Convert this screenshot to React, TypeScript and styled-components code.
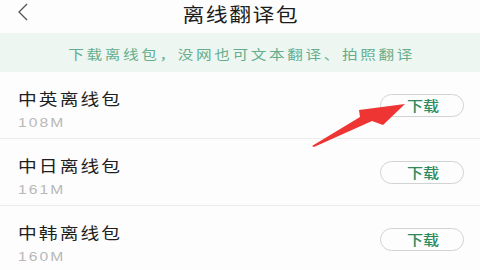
import React from "react";
import styled, { createGlobalStyle } from "styled-components";

const GlobalStyle = createGlobalStyle`
  html, body { margin: 0; padding: 0; background: #fdfdfd; }
  body { font-family: "Noto Sans CJK SC", "Noto Sans", sans-serif; }
  * { box-sizing: border-box; }
`;

const Page = styled.div`
  position: relative;
  width: 480px;
  height: 270px;
  overflow: hidden;
  background: #fdfdfd;
`;

const Header = styled.div`
  height: 33px;
  display: flex;
  align-items: flex-start;
  justify-content: center;
  position: relative;
  background: #fdfdfd;
`;

const BackButton = styled.div`
  position: absolute;
  left: 14px;
  top: 2px;
  width: 18px;
  height: 20px;
  display: flex;
  align-items: center;
  justify-content: center;
`;

const Title = styled.h1`
  margin: 0;
  display: inline-block;
  padding-left: 1px;
  font-size: 19px;
  font-weight: 400;
  letter-spacing: 1.3px;
  line-height: 28px;
  color: #1d1d1d;
  transform: scaleX(1.15);
  transform-origin: center;
`;

const Banner = styled.div`
  height: 39px;
  background: #eef6f2;
  display: flex;
  align-items: center;
  justify-content: center;
  padding-top: 1px;
`;

const BannerText = styled.span`
  display: inline-block;
  font-size: 13px;
  letter-spacing: 2.2px;
  padding-left: 2px;
  color: #64ae8d;
  transform: scaleX(1.2);
  transform-origin: center;
`;

const List = styled.div`
  display: flex;
  flex-direction: column;
`;

const Row = styled.div`
  height: 67px;
  display: flex;
  align-items: center;
  justify-content: space-between;
  border-bottom: 1px solid #ececec;
  padding: 0 16px 0 18px;
`;

const Info = styled.div`
  align-self: flex-start;
  display: flex;
  flex-direction: column;
  align-items: flex-start;
  padding-top: 15px;
`;

const Name = styled.div`
  display: inline-block;
  font-size: 16px;
  letter-spacing: 1.8px;
  line-height: 23px;
  color: #1f1f1f;
  transform: scaleX(1.17);
  transform-origin: left center;
`;

const Size = styled.div`
  display: inline-block;
  font-family: "Liberation Sans", Arial, sans-serif;
  font-size: 13px;
  letter-spacing: 1.7px;
  line-height: 25px;
  color: #b8b8b8;
  transform: scaleX(1.2);
  transform-origin: left center;
`;

const DownloadButton = styled.button`
  width: 84px;
  height: 23px;
  border: 1px solid #d2d2d2;
  border-radius: 12px;
  background: #fdfdfd;
  padding: 0 0 0 2px;
  display: flex;
  align-items: center;
  justify-content: center;
  cursor: pointer;
`;

const ButtonLabel = styled.span`
  display: inline-block;
  color: #2f8a5c;
  font-family: "Noto Sans CJK SC", sans-serif;
  font-size: 14px;
  font-weight: 500;
  line-height: 20px;
  transform: scaleX(1.15);
`;

const ArrowOverlay = styled.svg`
  position: absolute;
  left: 0;
  top: 0;
  pointer-events: none;
`;

const packs = [
  { name: "中英离线包", size: "108M" },
  { name: "中日离线包", size: "161M" },
  { name: "中韩离线包", size: "160M" },
];

export default function App() {
  return (
    <Page>
      <GlobalStyle />
      <Header>
        <BackButton>
          <svg width="14" height="18" viewBox="0 0 14 18">
            <polyline points="11,1 3,9 11,17" fill="none" stroke="#555" strokeWidth="1.3" />
          </svg>
        </BackButton>
        <Title>离线翻译包</Title>
      </Header>
      <Banner>
        <BannerText>下载离线包，没网也可文本翻译、拍照翻译</BannerText>
      </Banner>
      <List>
        {packs.map((p) => (
          <Row key={p.name}>
            <Info>
              <Name>{p.name}</Name>
              <Size>{p.size}</Size>
            </Info>
            <DownloadButton>
              <ButtonLabel>下载</ButtonLabel>
            </DownloadButton>
          </Row>
        ))}
      </List>
      <ArrowOverlay width="480" height="270" viewBox="0 0 480 270">
        <polygon
          points="312,146 360,117 359,110 405,104 383,125 372,121 314,147"
          fill="#ef3434"
        />
      </ArrowOverlay>
    </Page>
  );
}
